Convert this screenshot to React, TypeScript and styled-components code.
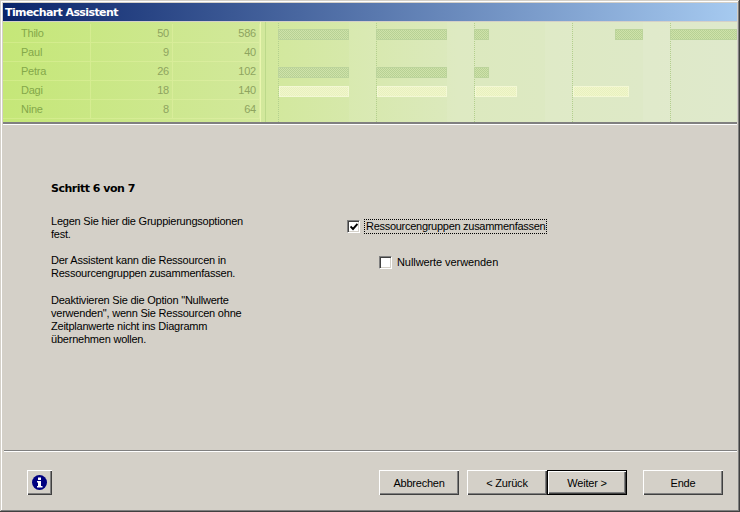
import styled, { createGlobalStyle } from "styled-components";

const GlobalStyle = createGlobalStyle`
    html, body {
        margin: 0;
        padding: 0;
        background: #d4d0c8;
    }
`;

const WindowEl = styled.div`
    width: 740px;
    height: 512px;
    box-sizing: border-box;
    padding: 3px;
    display: flex;
    flex-direction: column;
    background: #d4d0c8;
    overflow: hidden;
    font-family: "Liberation Sans", Arial, sans-serif;
    font-size: 11px;
    letter-spacing: -0.22px;
    color: #000;
    box-shadow: inset -1px -1px 0 #404040, inset 1px 1px 0 #d4d0c8,
        inset -2px -2px 0 #808080, inset 2px 2px 0 #fff;
`;

const TitleBar = styled.div`
    height: 18px;
    flex: none;
    margin-bottom: 1px;
    padding-left: 2px;
    display: flex;
    align-items: center;
    background: linear-gradient(90deg, #0a246a, #a6caf0);
    color: #fff;
    font-family: "DejaVu Sans", sans-serif;
    font-weight: bold;
    font-size: 11px;
    letter-spacing: -0.6px;
`;

const Banner = styled.div`
    height: 100px;
    flex: none;
    display: flex;
    overflow: hidden;
    background: linear-gradient(90deg, #c5e778 0%, #d2e89c 36%, #dce9be 62%, #dfe9cc 100%);
    border-bottom: 2px solid #808080;
    box-shadow: 0 1px 0 #fff;
`;

const NameTable = styled.div`
    width: 257px;
    flex: none;
    padding-top: 2px;
`;

const TableRow = styled.div`
    height: 18px;
    display: grid;
    grid-template-columns: 88px 82px 87px;
    border-bottom: 1px solid rgba(255, 255, 190, 0.22);
`;

const Cell = styled.div<{ $right?: boolean }>`
    line-height: 18px;
    box-sizing: border-box;
    padding: ${(props) => (props.$right ? "0 3px 0 0" : "0 0 0 18px")};
    text-align: ${(props) => (props.$right ? "right" : "left")};
    color: ${(props) => (props.$right ? "#8ea45f" : "#84a84a")};
    border-right: 1px solid rgba(255, 255, 190, 0.22);
`;

const Splitter = styled.div`
    width: 4px;
    flex: none;
    border-left: 1px solid #eaf6b0;
    border-right: 1px solid #bcd98a;
`;

const Chart = styled.svg`
    display: block;
    flex: 1;
    height: 100px;
`;

const Body = styled.main`
    flex: 1;
    display: flex;
    padding: 57px 0 0 48px;
    margin-top: 1px;
`;

const HelpColumn = styled.section`
    width: 205px;
    flex: none;
`;

const StepTitle = styled.h2`
    margin: 0 0 20px;
    font-size: 11px;
    line-height: 13px;
    font-weight: bold;
    font-family: "DejaVu Sans", sans-serif;
    letter-spacing: -0.5px;
`;

const HelpText = styled.p`
    margin: 0 0 13px;
    line-height: 13px;
    &:last-child {
        margin-top: 14px;
    }
`;

const OptionsColumn = styled.section`
    margin-left: 91px;
    padding-top: 37px;
`;

const OptionRow = styled.label<{ $nested?: boolean }>`
    display: flex;
    align-items: center;
    gap: ${(props) => (props.$nested ? "4px" : "5px")};
    height: 15px;
    margin-left: ${(props) => (props.$nested ? "32px" : "0")};
    margin-top: ${(props) => (props.$nested ? "21px" : "0")};
`;

const CheckBox = styled.span`
    width: 11px;
    height: 11px;
    flex: none;
    display: flex;
    background: #fff;
    border: 1px solid;
    border-color: #808080 #fff #fff #808080;
    box-shadow: inset 1px 1px 0 #404040, inset -1px -1px 0 #d4d0c8;
    svg {
        display: block;
        margin: 2px 1px 1px 2px;
    }
`;

const OptionLabel = styled.span<{ $focused?: boolean }>`
    line-height: 13px;
    padding: 0 1px;
    letter-spacing: ${(props) => (props.$focused ? "-0.28px" : "-0.08px")};
    outline: ${(props) => (props.$focused ? "1px dotted #000" : "none")};
`;

const Divider = styled.hr`
    flex: none;
    width: 733px;
    height: 1px;
    margin: 0 0 0 1px;
    border: none;
    background: #808080;
    box-shadow: 0 1px 0 #fff;
`;

const Footer = styled.footer`
    flex: none;
    height: 58px;
    box-sizing: border-box;
    padding: 19px 14px 0 24px;
    display: flex;
    align-items: flex-start;
`;

const Button = styled.button<{ $default?: boolean; $gap?: number }>`
    width: 80px;
    height: 25px;
    padding: 0;
    margin-left: ${(props) => props.$gap ?? 0}px;
    background: #d4d0c8;
    font-family: inherit;
    font-size: 11px;
    letter-spacing: inherit;
    color: #000;
    border: ${(props) => (props.$default ? "1px solid #000" : "none")};
    box-shadow: inset 1px 1px 0 #fff, inset -1px -1px 0 #404040, inset -2px -2px 0 #808080;
`;

const InfoButton = styled(Button)`
    width: 25px;
    display: flex;
    align-items: center;
    justify-content: center;
    margin-right: auto;
`;

interface PersonRow {
    name: string;
    count: number;
    total: number;
}

const people: PersonRow[] = [
    { name: "Thilo", count: 50, total: 586 },
    { name: "Paul", count: 9, total: 40 },
    { name: "Petra", count: 26, total: 102 },
    { name: "Dagi", count: 18, total: 140 },
    { name: "Nine", count: 8, total: 64 },
];

// x / y / breite relativ zum Chart
const darkBars = [
    [12, 7, 71],
    [110, 7, 71],
    [208, 7, 15],
    [349, 7, 28],
    [404, 7, 67],
    [12, 45, 71],
    [110, 45, 71],
    [208, 45, 15],
];
const lightBars = [
    [12, 64, 71],
    [110, 64, 71],
    [208, 64, 43],
    [306, 64, 57],
];
const gridLines = [12, 110, 208, 306, 404];

function GanttChart() {
    return (
        <Chart viewBox="0 0 471 100" width="471" height="100">
            <defs>
                <pattern id="darkDither" width="2" height="2" patternUnits="userSpaceOnUse">
                    <rect width="2" height="2" fill="#cfe2aa" />
                    <rect width="1" height="1" fill="#b7d194" />
                    <rect x="1" y="1" width="1" height="1" fill="#b7d194" />
                </pattern>
                <pattern id="lightDither" width="2" height="2" patternUnits="userSpaceOnUse">
                    <rect width="2" height="2" fill="#f1f6cc" />
                    <rect width="1" height="1" fill="#e8f1be" />
                    <rect x="1" y="1" width="1" height="1" fill="#e8f1be" />
                </pattern>
            </defs>
            {gridLines.map((x) => (
                <rect key={x} x={x + 71} y="0" width="27" height="100" fill="#fff" opacity="0.07" />
            ))}
            {gridLines.map((x) => (
                <line
                    key={x}
                    x1={x + 0.5}
                    x2={x + 0.5}
                    y1="1"
                    y2="100"
                    stroke="#b3cf8d"
                    strokeDasharray="1 1"
                />
            ))}
            {darkBars.map(([x, y, w]) => (
                <rect
                    key={`${x}-${y}`}
                    x={x + 0.5}
                    y={y + 0.5}
                    width={w - 1}
                    height="10"
                    fill="url(#darkDither)"
                    stroke="#bcd49c"
                />
            ))}
            {lightBars.map(([x, y, w]) => (
                <rect
                    key={`${x}-${y}`}
                    x={x + 1.5}
                    y={y + 0.5}
                    width={w - 2}
                    height="10"
                    fill="url(#lightDither)"
                    stroke="#f3f8d4"
                />
            ))}
        </Chart>
    );
}

function CheckMark() {
    return (
        <svg width="8" height="8" viewBox="0 0 8 8">
            <path d="M0.5 3.5 L3 6 L7.5 1" fill="none" stroke="#000" strokeWidth="1.9" />
        </svg>
    );
}

function InfoIcon() {
    return (
        <svg width="15" height="15" viewBox="0 0 15 15">
            <circle cx="7.5" cy="7.5" r="7.5" fill="#000080" />
            <rect x="6" y="2.5" width="3" height="2.5" fill="#fff" />
            <path d="M5 6h4v5h1.5v1.5h-5.5V11H6V7.5H5z" fill="#fff" />
        </svg>
    );
}

export default function App() {
    return (
        <WindowEl>
            <GlobalStyle />
            <TitleBar>Timechart Assistent</TitleBar>
            <Banner>
                <NameTable>
                    {people.map((person) => (
                        <TableRow key={person.name}>
                            <Cell>{person.name}</Cell>
                            <Cell $right>{person.count}</Cell>
                            <Cell $right>{person.total}</Cell>
                        </TableRow>
                    ))}
                </NameTable>
                <Splitter />
                <GanttChart />
            </Banner>
            <Body>
                <HelpColumn>
                    <StepTitle>Schritt 6 von 7</StepTitle>
                    <HelpText>
                        Legen Sie hier die Gruppierungsoptionen
                        <br />
                        fest.
                    </HelpText>
                    <HelpText>
                        Der Assistent kann die Ressourcen in
                        <br />
                        Ressourcengruppen zusammenfassen.
                    </HelpText>
                    <HelpText>
                        Deaktivieren Sie die Option "Nullwerte
                        <br />
                        verwenden", wenn Sie Ressourcen ohne
                        <br />
                        Zeitplanwerte nicht ins Diagramm
                        <br />
                        übernehmen wollen.
                    </HelpText>
                </HelpColumn>
                <OptionsColumn>
                    <OptionRow>
                        <CheckBox>
                            <CheckMark />
                        </CheckBox>
                        <OptionLabel $focused>Ressourcengruppen zusammenfassen</OptionLabel>
                    </OptionRow>
                    <OptionRow $nested>
                        <CheckBox />
                        <OptionLabel>Nullwerte verwenden</OptionLabel>
                    </OptionRow>
                </OptionsColumn>
            </Body>
            <Divider />
            <Footer>
                <InfoButton>
                    <InfoIcon />
                </InfoButton>
                <Button>Abbrechen</Button>
                <Button $gap={8}>&lt; Zurück</Button>
                <Button $default>Weiter &gt;</Button>
                <Button $gap={16}>Ende</Button>
            </Footer>
        </WindowEl>
    );
}
